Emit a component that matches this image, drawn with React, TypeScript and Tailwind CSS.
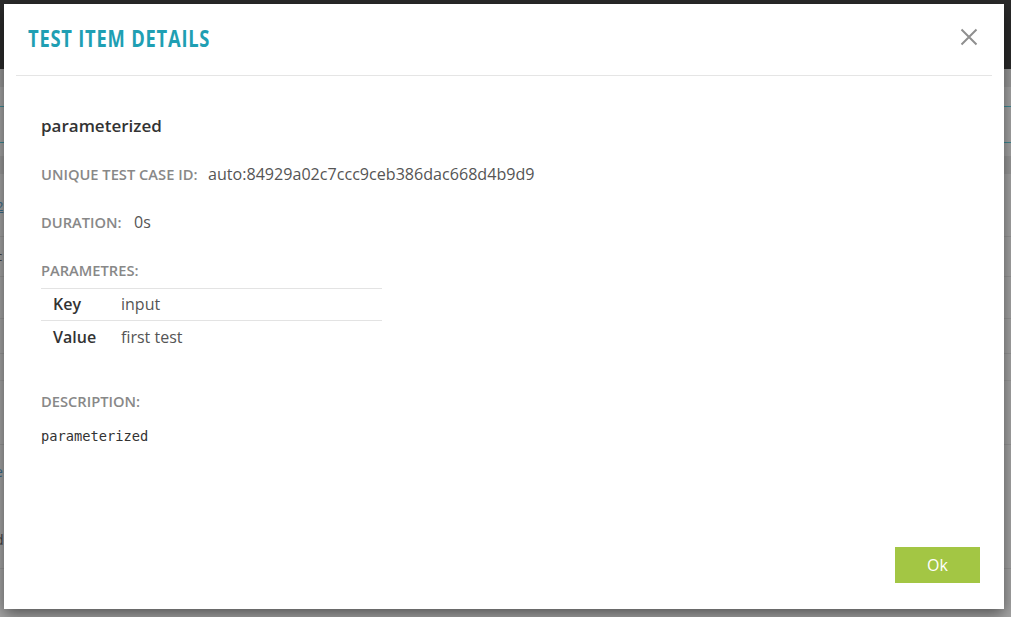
import React from "react";

const sans = { fontFamily: '"Open Sans", "Noto Sans", sans-serif' };

function Background() {
  return (
    <div className="absolute inset-0 flex flex-col bg-[#a6a6a6]">
      <div className="h-[69px] bg-[#2b2b2b] shrink-0" />
      <div className="h-[18px] bg-[#9a9a9a] shrink-0" />
      <div className="h-[20px] border-b border-[#3f8c97] shrink-0" />
      <div className="h-[36px] border-b border-[#3f8c97] shrink-0" />
      <div className="h-[13px] shrink-0" />
      <div className="h-[18px] bg-[#9b9b9b] shrink-0" />
      <div className="h-[63px] border-b border-[#999] shrink-0 relative">
        <span className="absolute left-[-4px] top-[23px] text-[13px] text-[#3a6d8c] underline" style={sans}>2</span>
      </div>
      <div className="h-[40px] border-b border-[#999] shrink-0 relative">
        <span className="absolute left-[-4px] top-[10px] text-[13px] text-[#444]" style={sans}>c</span>
      </div>
      <div className="h-[42px] border-b border-[#999] shrink-0" />
      <div className="h-[35px] border-b border-[#999] shrink-0" />
      <div className="h-[27px] border-b border-[#9c9c9c] shrink-0" />
      <div className="h-[64px] border-b border-[#999] shrink-0" />
      <div className="h-[64px] shrink-0 relative">
        <span className="absolute left-[-5px] top-[16px] text-[14px] text-[#3a6d8c]" style={sans}>e</span>
      </div>
      <div className="h-[60px] border-b border-[#999] shrink-0 relative">
        <span className="absolute left-[-5px] top-[20px] text-[14px] text-[#444]" style={sans}>d</span>
      </div>
    </div>
  );
}

export default function App() {
  return (
    <div className="relative w-[1011px] h-[617px] overflow-hidden" style={sans}>
      <Background />
      <div className="absolute left-[4px] top-[4px] w-[1000px] h-[605px] bg-white shadow-[0_5px_15px_rgba(0,0,0,0.5)] flex flex-col">
        <div className="mx-3 h-[72px] border-b border-[#e5e5e5] flex items-start justify-between shrink-0">
          <div className="pl-3 pt-[20px]">
            <h1 className="text-[24px] leading-[28px] font-bold tracking-[1px] text-[#1f9fb3] origin-left scale-x-[0.765] whitespace-nowrap">
              TEST ITEM DETAILS
            </h1>
          </div>
          <button className="mr-[14px] mt-[24px] w-[18px] h-[18px] flex items-center justify-center">
            <svg width="18" height="18" viewBox="0 0 18 18">
              <path d="M1.5 1.5 L16.5 16.5 M16.5 1.5 L1.5 16.5" stroke="#8f8f8f" strokeWidth="2" />
            </svg>
          </button>
        </div>
        <div className="px-[37px] flex flex-col flex-1">
          <div className="mt-[39px] text-[17px] leading-[22px] font-semibold text-[#333]">parameterized</div>
          <div className="mt-[27px] flex items-baseline leading-[20px]">
            <span className="text-[14.7px] font-semibold text-[#888] w-[167px]">UNIQUE TEST CASE ID:</span>
            <span className="text-[16.1px] text-[#555]">auto:84929a02c7ccc9ceb386dac668d4b9d9</span>
          </div>
          <div className="mt-[28px] flex items-baseline leading-[20px]">
            <span className="text-[14.7px] font-semibold text-[#888] w-[93px]">DURATION:</span>
            <span className="text-[16px] text-[#555]">0s</span>
          </div>
          <div className="mt-[28px] text-[14.7px] leading-[20px] font-semibold text-[#888]">PARAMETRES:</div>
          <div className="mt-[8px] w-[341px] border-t border-[#e3e3e3]">
            <div className="h-[32px] flex items-center border-b border-[#e3e3e3] text-[16px] pb-[1px]">
              <span className="pl-[12px] w-[80px] font-semibold text-[#333]">Key</span>
              <span className="text-[#555]">input</span>
            </div>
            <div className="h-[32px] flex items-center text-[16px] pb-[1px]">
              <span className="pl-[12px] w-[80px] font-semibold text-[#333]">Value</span>
              <span className="text-[#555]">first test</span>
            </div>
          </div>
          <div className="mt-[38px] text-[14.7px] leading-[20px] font-semibold text-[#888]">DESCRIPTION:</div>
          <div className="mt-[16px] text-[13.7px] leading-[18px] text-[#333]" style={{ fontFamily: '"DejaVu Sans Mono", monospace' }}>
            parameterized
          </div>
          <div className="flex-1" />
          <div className="flex justify-end pb-[26px]">
            <button className="w-[85px] h-[36px] bg-[#a3c644] text-white text-[16px] mr-[-13px]">Ok</button>
          </div>
        </div>
      </div>
    </div>
  );
}
